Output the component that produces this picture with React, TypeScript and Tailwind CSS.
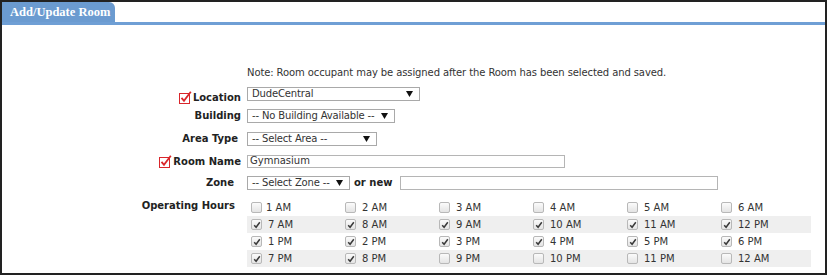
import React from "react";

const hours: { label: string; checked: boolean }[][] = [
  [
    { label: "1 AM", checked: false },
    { label: "2 AM", checked: false },
    { label: "3 AM", checked: false },
    { label: "4 AM", checked: false },
    { label: "5 AM", checked: false },
    { label: "6 AM", checked: false },
  ],
  [
    { label: "7 AM", checked: true },
    { label: "8 AM", checked: true },
    { label: "9 AM", checked: true },
    { label: "10 AM", checked: true },
    { label: "11 AM", checked: true },
    { label: "12 PM", checked: true },
  ],
  [
    { label: "1 PM", checked: true },
    { label: "2 PM", checked: true },
    { label: "3 PM", checked: true },
    { label: "4 PM", checked: true },
    { label: "5 PM", checked: true },
    { label: "6 PM", checked: true },
  ],
  [
    { label: "7 PM", checked: true },
    { label: "8 PM", checked: true },
    { label: "9 PM", checked: false },
    { label: "10 PM", checked: false },
    { label: "11 PM", checked: false },
    { label: "12 AM", checked: false },
  ],
];

function RequiredMark() {
  return (
    <svg width="13" height="13" viewBox="0 0 13 13" className="mr-[1px] shrink-0">
      <rect x="0.5" y="2.5" width="10" height="10" fill="white" stroke="#d9262b" strokeWidth="1" />
      <path d="M2.5 6.8 L5 9.8 L11.8 0.8" fill="none" stroke="#d9262b" strokeWidth="1.8" />
    </svg>
  );
}

function Arrow() {
  return (
    <svg width="7" height="6" viewBox="0 0 7 6" className="shrink-0">
      <polygon points="0,0 7,0 3.5,6" fill="#111" />
    </svg>
  );
}

function FakeSelect({ text, width }: { text: string; width: string }) {
  return (
    <div
      className={`flex h-[14px] items-center justify-between border border-[#a9a9a9] bg-white pl-[4px] pr-[6px] text-[10px] leading-none tracking-[-0.15px] text-[#333] ${width}`}
    >
      <span className="whitespace-nowrap">{text}</span>
      <Arrow />
    </div>
  );
}

function Box({ checked }: { checked: boolean }) {
  return (
    <span className="flex h-[11px] w-[11px] shrink-0 items-center justify-center rounded-[2px] border border-[#b8b8b8] bg-gradient-to-b from-[#fbfbfb] to-[#e4e4e4]">
      {checked && (
        <svg width="8" height="8" viewBox="0 0 8 8">
          <path d="M1.2 4.2 L3.1 6.3 L6.8 1.3" fill="none" stroke="#3a3a3a" strokeWidth="1.5" />
        </svg>
      )}
    </span>
  );
}

function Label({ children, pr = "pr-0", required = false }: { children: React.ReactNode; pr?: string; required?: boolean }) {
  return (
    <div className={`flex w-[239px] shrink-0 items-end justify-end text-[10px] font-bold leading-[12px] text-[#222] ${pr}`}>
      {required && <RequiredMark />}
      <span className="whitespace-nowrap">{children}</span>
    </div>
  );
}

export default function App() {
  return (
    <div className="flex h-[275px] w-[827px] flex-col border-2 border-[#222] bg-white font-['DejaVu_Sans',Verdana,sans-serif]">
      <div className="flex h-[20px]">
        <div className="flex w-[113px] items-center whitespace-nowrap rounded-tr-[6px] bg-[#6b9bd0] pl-[8px] font-['Liberation_Serif',serif] text-[12.5px] font-bold text-white">
          Add/Update Room
        </div>
      </div>
      <div className="h-[3px] bg-[#6f9fd5]" />

      <div className="flex flex-col pt-[42px]">
        <div className="flex h-[12px] items-center">
          <div className="w-[245px] shrink-0" />
          <span className="whitespace-nowrap text-[10px] leading-[12px] tracking-[-0.1px] text-[#333]">
            Note: Room occupant may be assigned after the Room has been selected and saved.
          </span>
        </div>

        <div className="mt-[3px] flex h-[23px] items-center gap-[6px]">
          <div className="flex self-stretch pb-[1px]">
            <Label required>Location</Label>
          </div>
          <FakeSelect text="DudeCentral" width="w-[173px]" />
        </div>

        <div className="flex h-[22px] items-center gap-[6px]">
          <Label>Building</Label>
          <FakeSelect text="-- No Building Available --" width="w-[148px]" />
        </div>

        <div className="flex h-[23px] items-center gap-[6px]">
          <Label pr="pr-[3px]">Area Type</Label>
          <FakeSelect text="-- Select Area --" width="w-[130px]" />
        </div>

        <div className="flex h-[22px] items-center gap-[6px]">
          <div className="flex h-[14px] items-end">
            <Label required>Room Name</Label>
          </div>
          <div className="flex h-[13px] w-[318px] items-center border border-[#b5b5b5] bg-white pl-[2px] text-[10px] leading-none text-[#333]">
            Gymnasium
          </div>
        </div>

        <div className="flex h-[22px] items-center gap-[6px]">
          <Label pr="pr-[7px]">Zone</Label>
          <FakeSelect text="-- Select Zone --" width="w-[103px]" />
          <span className="ml-[-2px] whitespace-nowrap text-[10px] font-bold leading-[12px] text-[#222]">or new</span>
          <div className="ml-[2px] h-[14px] w-[318px] border border-[#b5b5b5] bg-white" />
        </div>

        <div className="mt-[5px] flex items-start gap-[6px]">
          <div className="pt-[1px]">
            <Label pr="pr-[6px]">Operating Hours</Label>
          </div>
          <div className="flex w-[564px] flex-col">
            {hours.map((row, r) => (
              <div key={r} className={`flex h-[17px] items-center ${r % 2 === 1 ? "bg-[#efefef]" : "bg-white"}`}>
                {row.map((h, c) => (
                  <div key={h.label} className="flex w-[94px] items-center pl-[4px]">
                    <Box checked={h.checked} />
                    <span className={`${r === 0 && c === 0 ? "ml-[4px]" : "ml-[6px]"} whitespace-nowrap text-[10px] leading-none text-[#333]`}>
                      {h.label}
                    </span>
                  </div>
                ))}
              </div>
            ))}
          </div>
        </div>
      </div>
    </div>
  );
}
